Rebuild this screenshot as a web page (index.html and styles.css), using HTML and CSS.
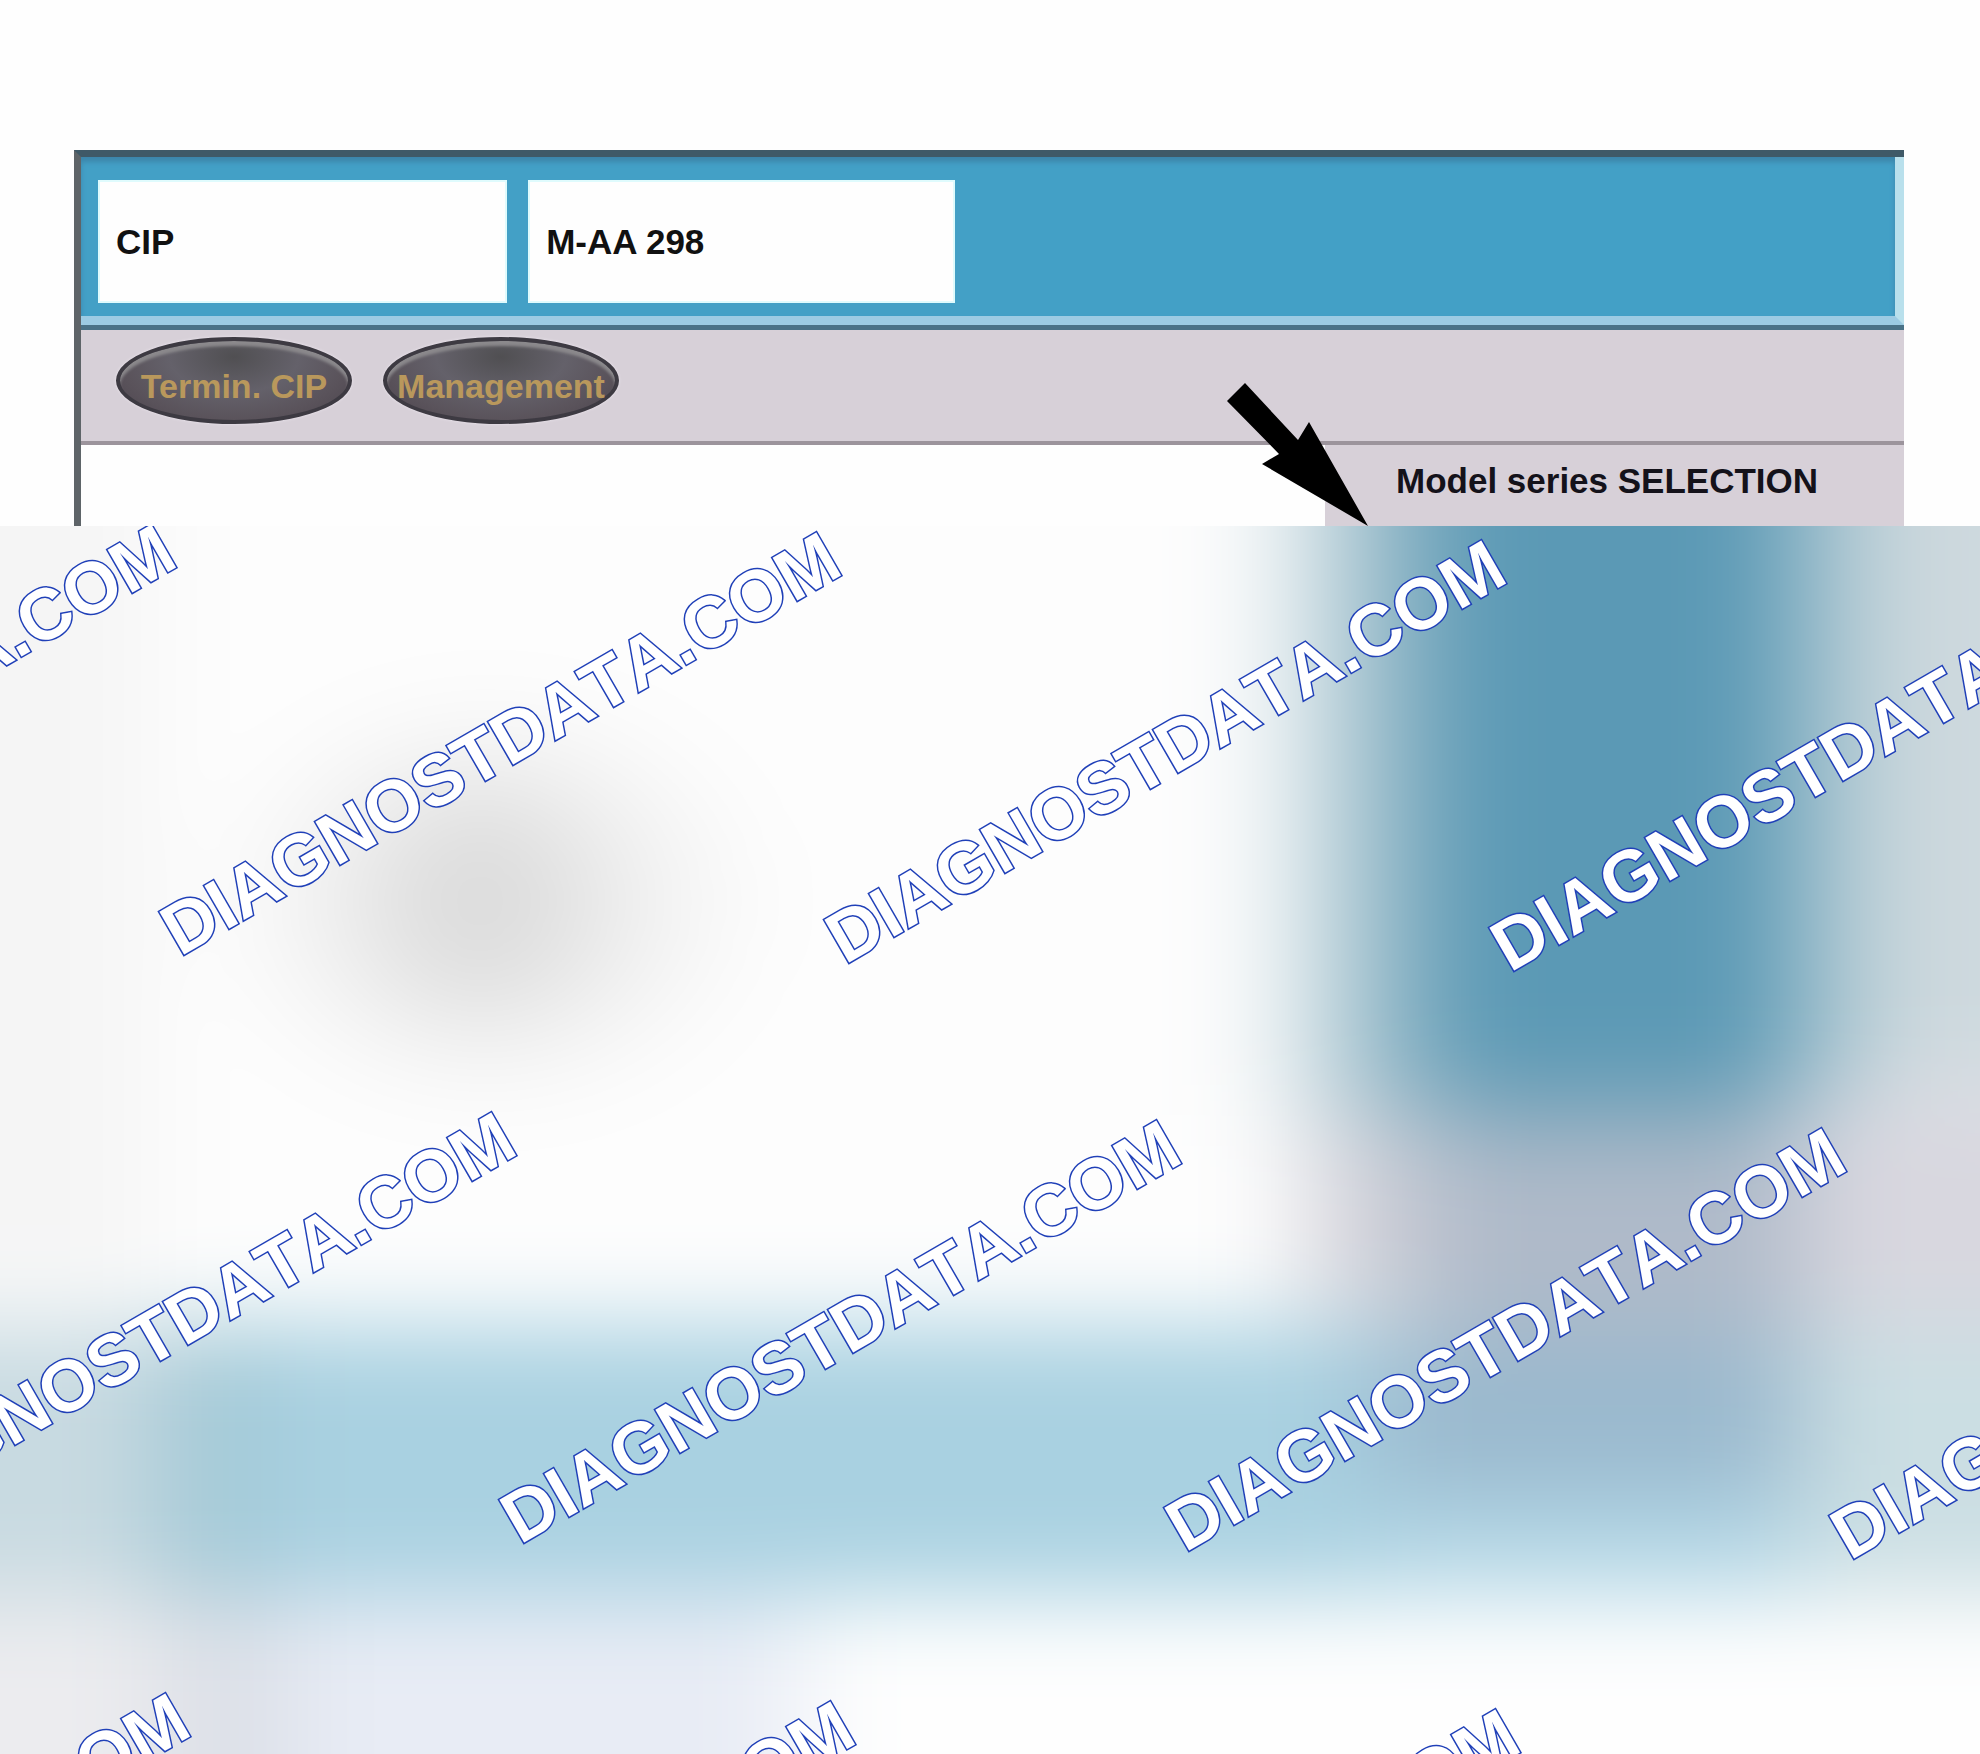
FILE: index.html
```
<!DOCTYPE html>
<html lang="en">
<head>
  <meta charset="UTF-8">
  <meta name="viewport" content="width=device-width, initial-scale=1.0">
  <title>Model series SELECTION</title>
  <link rel="stylesheet" href="styles.css">
</head>
<body>
<main class="window">
  <header class="titlebar">
    <input class="field field-program" type="text" value="CIP" aria-label="Program" readonly>
    <input class="field field-plate" type="text" value="M-AA 298" aria-label="License plate" readonly>
  </header>
  <nav class="toolbar">
    <button class="oval" type="button">Termin. CIP</button>
    <button class="oval" type="button">Management</button>
  </nav>
  <div class="content">
    <aside class="panel">
      <h1 class="panel-title">Model series SELECTION</h1>
      <svg class="arrow" width="142" height="144" viewBox="0 0 142 144" aria-hidden="true">
        <path d="M19 1 L1 19 L53 72 L36 82 L142 144 L83 40 L72 58 Z"/>
      </svg>
    </aside>
  </div>
</main>

<section class="preview">
  <svg class="haze" viewBox="0 0 1980 1228" preserveAspectRatio="none" aria-hidden="true">
    <defs>
      <filter id="soft" filterUnits="userSpaceOnUse" x="-200" y="-200" width="2380" height="1628" color-interpolation-filters="sRGB">
        <feGaussianBlur stdDeviation="54 46"/>
      </filter>
    </defs>
    <g filter="url(#soft)">
      <rect x="-200" y="-200" width="2380" height="1628" fill="#fdfdfd"/>
      <rect x="-200" y="-200" width="350" height="960" fill="#f5f5f5"/>
      <ellipse cx="490" cy="375" rx="250" ry="190" fill="#f6f6f6"/>
      <ellipse cx="485" cy="375" rx="170" ry="145" fill="#ececec"/>
      <ellipse cx="480" cy="375" rx="95" ry="100" fill="#dcdcdc"/>
      <!-- side column -->
      <rect x="1270" y="-200" width="70" height="790" fill="#dbe6ea"/>
      <rect x="1340" y="-200" width="90" height="790" fill="#98bac8"/>
      <rect x="1430" y="-200" width="360" height="760" fill="#5b99b5"/>
      <rect x="1430" y="560" width="360" height="50" fill="#83a9bd"/>
      <rect x="1790" y="-200" width="80" height="780" fill="#a9c5d0"/>
      <rect x="1870" y="-200" width="310" height="760" fill="#ced9de"/>
      <rect x="1310" y="590" width="110" height="200" fill="#d0d0d8"/>
      <rect x="1420" y="610" width="380" height="200" fill="#afbac9"/>
      <rect x="1800" y="570" width="380" height="230" fill="#d8d7df"/>
      <!-- lower band -->
      <rect x="-200" y="800" width="360" height="270" fill="#c8dae1"/>
      <rect x="160" y="800" width="100" height="270" fill="#a1c7d5"/>
      <rect x="260" y="800" width="1140" height="270" fill="#a9d1e1"/>
      <rect x="1370" y="810" width="430" height="160" fill="#9ab9ce"/>
      <rect x="1370" y="970" width="430" height="100" fill="#b2d6e5"/>
      <rect x="1800" y="800" width="380" height="270" fill="#cbdee3"/>
      <!-- footer -->
      <rect x="-200" y="1070" width="370" height="358" fill="#ececef"/>
      <rect x="170" y="1070" width="110" height="358" fill="#d9dde5"/>
      <rect x="280" y="1070" width="520" height="358" fill="#e8ecf5"/>
      <rect x="800" y="1070" width="1380" height="358" fill="#fefefe"/>
    </g>
  </svg>
  <svg class="watermark" width="100%" height="100%">
    <text transform="translate(-485 423) rotate(-30)">DIAGNOSTDATA.COM</text>
    <text transform="translate(180 431) rotate(-30)">DIAGNOSTDATA.COM</text>
    <text transform="translate(845 439) rotate(-30)">DIAGNOSTDATA.COM</text>
    <text transform="translate(1510 447) rotate(-30)">DIAGNOSTDATA.COM</text>
    <text transform="translate(-145 1011) rotate(-30)">DIAGNOSTDATA.COM</text>
    <text transform="translate(520 1019) rotate(-30)">DIAGNOSTDATA.COM</text>
    <text transform="translate(1185 1027) rotate(-30)">DIAGNOSTDATA.COM</text>
    <text transform="translate(1850 1035) rotate(-30)">DIAGNOSTDATA.COM</text>
    <text transform="translate(-471 1592) rotate(-30)">DIAGNOSTDATA.COM</text>
    <text transform="translate(194 1600) rotate(-30)">DIAGNOSTDATA.COM</text>
    <text transform="translate(859 1608) rotate(-30)">DIAGNOSTDATA.COM</text>
  </svg>
</section>
</body>
</html>
```
FILE: styles.css
```
* {
  box-sizing: border-box;
}
body {
  margin: 0;
  min-height: 100vh;
  display: flex;
  flex-direction: column;
  background: #fefefe;
  font-family: "Liberation Sans", Arial, sans-serif;
}
.window {
  margin: 150px 76px 0 74px;
  border-top: 7px solid #3f5967;
  border-left: 7px solid #5e6468;
}

/* blue bar with the two fields */
.titlebar {
  display: flex;
  gap: 21px;
  padding: 23px 18px 13px 17px;
  background: #43a0c6;
  border-right: 9px solid #b9e0ec;
  border-bottom: 9px solid #9ccbe3;
  box-shadow: inset 0 5px 5px #3d86ab;
}
.field {
  min-width: 0;
  height: 123px;
  padding: 0 16px;
  border: 2px solid #dffbfd;
  border-radius: 0;
  background: #fefefe;
  color: #111;
  font: bold 35px "Liberation Sans", Arial, sans-serif;
}
.field-program {
  flex: 0 0 23%;
}
.field-plate {
  flex: 0 0 24%;
}

.toolbar {
  display: flex;
  gap: 31px;
  padding: 7px 35px 17px;
  background: #d7d0d8;
  border-top: 5px solid #4a7287;
  border-bottom: 4px solid #9c949c;
}
.oval {
  width: 236px;
  height: 87px;
  padding: 12px 0 0;
  border: 4px solid #3d3a42;
  border-radius: 50%;
  background: radial-gradient(ellipse at 50% 20%, #504f52 0, #64616a 40%, #5a535b 70%, #4b434c 100%);
  box-shadow: inset 0 5px 3px #8b898c, 0 0 3px #eee8f0;
  color: #b9985c;
  font: bold 34px "Liberation Sans", Arial, sans-serif;
  white-space: nowrap;
}

.content {
  display: flex;
  justify-content: flex-end;
  background: #fefefe;
}
.panel {
  position: relative;
  width: 579px;
  padding: 16px 0 25px 71px;
  background: #d7d0d8;
}
.panel-title {
  margin: 0;
  color: #14121a;
  font-size: 35px;
  line-height: 40px;
}
.arrow {
  position: absolute;
  right: 536px;
  bottom: 0;
}

/* blurred lower part with the repeated site name */
.preview {
  position: relative;
  flex: 1;
  overflow: hidden;
}
.haze,
.watermark {
  position: absolute;
  top: 0;
  left: 0;
  width: 100%;
  height: 100%;
}
.watermark text {
  fill: #fff;
  stroke: #2040b8;
  stroke-width: 3px;
  paint-order: stroke;
  font-size: 72px;
  font-weight: bold;
  font-kerning: none;
}
```
